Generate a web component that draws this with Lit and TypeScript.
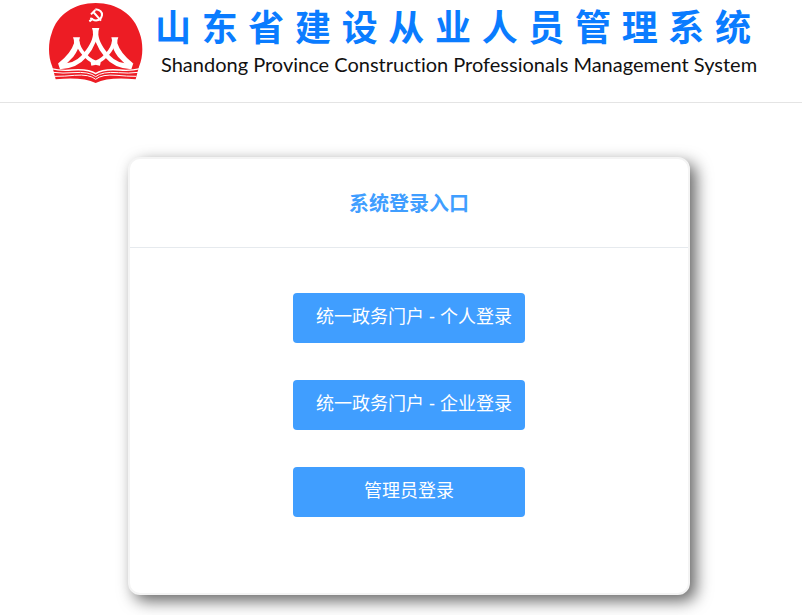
import { LitElement, html, svg, css } from "lit";
import { customElement } from "lit/decorators.js";

const figureHalf = () => svg`
  <path
    fill="#fff"
    d="M129 84H141V124Q131 150 112 172Q84 206 33 208L27 190Q72 194 97 167C119 143 130 122 132 104Q133 94 129 84Z"
  />
  <path
    fill="#fff"
    d="M72 112H93Q90 120 91 130Q88 152 73 170Q56 190 38 200L28 190Q66 160 75 130Q76 120 72 112Z"
  />
  <path
    fill="none"
    stroke="#fff"
    stroke-width="11"
    d="M86 124C88 148 116 184 154 192"
  />
`;

@customElement("site-emblem")
export class SiteEmblem extends LitElement {
  static styles = css`
    :host {
      display: block;
    }
    .emblem {
      display: block;
      width: 96px;
      height: 84px;
    }
  `;

  render() {
    return html`
      <svg class="emblem" viewBox="0 0 288 252" role="img" aria-label="系统标志">
        <path
          fill="#ed1c24"
          d="M10 200C-4 168 -2 126 8 100C24 44 76 9 140 9S256 44 272 100C282 126 284 168 270 200L260 238Q180 230 140 249Q100 230 20 238Z"
        />
        <g>${figureHalf()}</g>
        <g transform="translate(280 0) scale(-1 1)">${figureHalf()}</g>
        <g fill="none" stroke="#fff">
          <path stroke-width="4" d="M6 206Q36 213 68 210Q119 206 140 221Q161 206 212 210Q244 213 274 206" />
          <path stroke-width="3" d="M12 217Q42 221 72 218Q121 214 140 230Q159 214 208 218Q238 221 268 217" />
          <path stroke-width="3" d="M18 229Q48 229 76 226Q122 222 140 238Q158 222 204 226Q232 229 262 229" />
          <path stroke-width="6" d="M139 28Q160 30 159 46Q155 64 136 61L124 54" />
          <path stroke-width="6" d="M133 36L156 62M126 43L139 30" />
          <path stroke-width="6" d="M132 56L121 64" />
        </g>
      </svg>
    `;
  }
}

@customElement("app-root")
export class AppRoot extends LitElement {
  static styles = css`
    :host {
      display: block;
      font-family: "Noto Sans CJK SC", sans-serif;
      background: #fff;
    }
    .header {
      display: flex;
      justify-content: center;
      gap: 10px;
      height: 102px;
      border-bottom: 1px solid #e4e4e4;
    }
    .titles {
      box-sizing: border-box;
      width: 598px;
      padding-right: 2px;
    }
    .title {
      margin: 0;
      font-weight: bold;
      font-size: 36px;
      line-height: 50px;
      color: #0a7cff;
      text-align: justify;
      text-align-last: justify;
    }
    .subtitle {
      margin: 0;
      padding-left: 6px;
      font-family: Lato, sans-serif;
      font-size: 20px;
      font-variant-ligatures: none;
      line-height: 28px;
      color: #111;
      white-space: nowrap;
    }
    .main {
      display: flex;
      justify-content: center;
      padding: 54px 16px 20px;
    }
    .card {
      box-sizing: border-box;
      width: 73%;
      margin-left: 16px;
      border: 2px solid #f4f4f4;
      border-radius: 12px;
      background: #fff;
      box-shadow: 6px 6px 16px #666;
    }
    .card-title {
      margin: 0;
      border-bottom: 1px solid #e6eaee;
      font-weight: bold;
      font-size: 20px;
      line-height: 88px;
      text-align: center;
      color: #409eff;
    }
    .actions {
      display: flex;
      flex-direction: column;
      align-items: center;
      gap: 37px;
      padding: 45px 0 76px;
    }
    .action {
      width: 232px;
      height: 50px;
      padding: 0 0 2px;
      border: 0;
      border-radius: 4px;
      background: #409eff;
      color: #fff;
      font: 18px/24px "Liberation Sans", "Noto Sans CJK SC", sans-serif;
      cursor: pointer;
    }
    .portal {
      padding-left: 10px;
    }
  `;

  render() {
    return html`
      <header class="header">
        <site-emblem></site-emblem>
        <div class="titles">
          <h1 class="title">山东省建设从业人员管理系统</h1>
          <p class="subtitle">Shandong Province Construction Professionals Management System</p>
        </div>
      </header>
      <main class="main">
        <section class="card">
          <h2 class="card-title">系统登录入口</h2>
          <div class="actions">
            <button class="action portal" type="button">统一政务门户 - 个人登录</button>
            <button class="action portal" type="button">统一政务门户 - 企业登录</button>
            <button class="action" type="button">管理员登录</button>
          </div>
        </section>
      </main>
    `;
  }
}
